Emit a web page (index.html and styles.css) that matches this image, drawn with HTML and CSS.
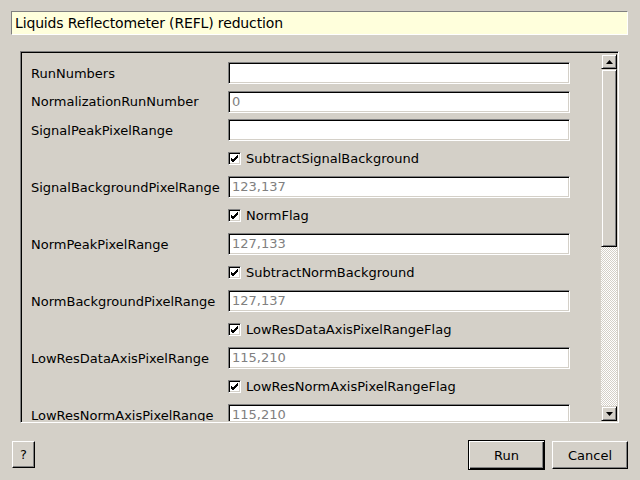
FILE: index.html
```html
<!DOCTYPE html>
<html>
<head>
<meta charset="utf-8">
<link rel="stylesheet" href="styles.css">
</head>
<body>
<div class="dialog">
  <div class="title">Liquids Reflectometer (REFL) reduction</div>
  <div class="frame">
    <div class="content">
      <div class="grid">
        <div class="label">RunNumbers</div><div class="field"></div>
        <div class="label">NormalizationRunNumber</div><div class="field ph">0</div>
        <div class="label">SignalPeakPixelRange</div><div class="field"></div>
        <div></div><div class="check"><span class="box"><svg width="9" height="9" viewBox="0 0 9 9"><path d="M1 4 L3 6 L8 1 M1 5 L3 7 L8 2 M1 6 L3 8 L8 3" stroke="#000" stroke-width="1" fill="none"/></svg></span>SubtractSignalBackground</div>
        <div class="label">SignalBackgroundPixelRange</div><div class="field ph">123,137</div>
        <div></div><div class="check"><span class="box"><svg width="9" height="9" viewBox="0 0 9 9"><path d="M1 4 L3 6 L8 1 M1 5 L3 7 L8 2 M1 6 L3 8 L8 3" stroke="#000" stroke-width="1" fill="none"/></svg></span>NormFlag</div>
        <div class="label">NormPeakPixelRange</div><div class="field ph">127,133</div>
        <div></div><div class="check"><span class="box"><svg width="9" height="9" viewBox="0 0 9 9"><path d="M1 4 L3 6 L8 1 M1 5 L3 7 L8 2 M1 6 L3 8 L8 3" stroke="#000" stroke-width="1" fill="none"/></svg></span>SubtractNormBackground</div>
        <div class="label">NormBackgroundPixelRange</div><div class="field ph">127,137</div>
        <div></div><div class="check"><span class="box"><svg width="9" height="9" viewBox="0 0 9 9"><path d="M1 4 L3 6 L8 1 M1 5 L3 7 L8 2 M1 6 L3 8 L8 3" stroke="#000" stroke-width="1" fill="none"/></svg></span>LowResDataAxisPixelRangeFlag</div>
        <div class="label">LowResDataAxisPixelRange</div><div class="field ph">115,210</div>
        <div></div><div class="check"><span class="box"><svg width="9" height="9" viewBox="0 0 9 9"><path d="M1 4 L3 6 L8 1 M1 5 L3 7 L8 2 M1 6 L3 8 L8 3" stroke="#000" stroke-width="1" fill="none"/></svg></span>LowResNormAxisPixelRangeFlag</div>
        <div class="label">LowResNormAxisPixelRange</div><div class="field ph">115,210</div>
      </div>
    </div>
    <div class="scrollbar">
      <div class="sbtn"><svg width="7" height="4" viewBox="0 0 7 4"><path d="M3.5 0 L7 4 L0 4 Z" fill="#000"/></svg></div>
      <div class="slider"></div>
      <div class="trough"></div>
      <div class="sbtn"><svg width="7" height="4" viewBox="0 0 7 4"><path d="M0 0 L7 0 L3.5 4 Z" fill="#000"/></svg></div>
    </div>
  </div>
  <div class="buttons">
    <div class="btn help">?</div>
    <div class="right">
      <div class="btn default">Run</div>
      <div class="btn">Cancel</div>
    </div>
  </div>
</div>
</body>
</html>
```
FILE: styles.css
```css
html, body {
  margin: 0;
  padding: 0;
  width: 640px;
  height: 480px;
  background: #d4d0c8;
  overflow: hidden;
}
.dialog {
  font-family: "DejaVu Sans", sans-serif;
  font-size: 13px;
  color: #000;
  padding: 11px 12px 0 11px;
  display: flex;
  flex-direction: column;
}
.title {
  height: 22px;
  line-height: 22px;
  font-size: 14px;
  letter-spacing: -0.15px;
  background: #ffffdc;
  border-top: 1px solid #808080;
  border-left: 1px solid #808080;
  border-bottom: 1px solid #ffffff;
  border-right: 1px solid #ffffff;
  padding-left: 3px;
  white-space: nowrap;
}
.frame {
  margin: 16px 9px 0 9px;
  height: 368px;
  border-top: 1px solid #808080;
  border-left: 1px solid #808080;
  border-bottom: 1px solid #ffffff;
  border-right: 1px solid #ffffff;
  box-shadow: inset 1px 1px 0 #000, inset -1px -1px 0 #d4d0c8;
  padding: 1px;
  display: flex;
  overflow: hidden;
}
.content {
  flex: 1;
  overflow: hidden;
  padding: 9px 0 0 9px;
}
.grid {
  display: grid;
  grid-template-columns: 197px 342px;
  grid-auto-rows: 22px;
  row-gap: 6.5px;
}
.label {
  display: flex;
  align-items: center;
  white-space: nowrap;
}
.field {
  box-sizing: border-box;
  height: 22px;
  background: #fff;
  border-top: 1px solid #808080;
  border-left: 1px solid #808080;
  border-bottom: 1px solid #ffffff;
  border-right: 1px solid #ffffff;
  box-shadow: inset 1px 1px 0 #000, inset -1px -1px 0 #d4d0c8;
  padding-left: 3px;
  line-height: 20px;
}
.ph {
  color: #808080;
}
.check {
  display: flex;
  align-items: center;
  white-space: nowrap;
}
.box {
  box-sizing: border-box;
  width: 13px;
  height: 13px;
  background: #fff;
  border-top: 1px solid #808080;
  border-left: 1px solid #808080;
  border-bottom: 1px solid #ffffff;
  border-right: 1px solid #ffffff;
  box-shadow: inset 1px 1px 0 #000, inset -1px -1px 0 #d4d0c8;
  display: flex;
  align-items: center;
  justify-content: center;
  margin-right: 5px;
}
.box svg {
  display: block;
}
.scrollbar {
  width: 16px;
  display: flex;
  flex-direction: column;
  padding-top: 1px;
  box-sizing: border-box;
}
.sbtn, .slider {
  box-sizing: border-box;
  background: #d4d0c8;
  border-top: 1px solid #d4d0c8;
  border-left: 1px solid #d4d0c8;
  border-bottom: 1px solid #000;
  border-right: 1px solid #000;
  box-shadow: inset 1px 1px 0 #fff, inset -1px -1px 0 #808080;
}
.sbtn {
  height: 15px;
  display: flex;
  align-items: center;
  justify-content: center;
}
.sbtn svg {
  display: block;
}
.slider {
  height: 178px;
}
.trough {
  flex: 1;
  background: repeating-conic-gradient(#ffffff 0 25%, #d4d0c8 0 50%) 0 0 / 2px 2px;
}
.buttons {
  margin-top: 17px;
  display: flex;
  justify-content: space-between;
  align-items: flex-start;
}
.right {
  display: flex;
  gap: 7px;
}
.btn {
  box-sizing: border-box;
  height: 28px;
  width: 76px;
  margin-top: 1px;
  display: flex;
  align-items: center;
  justify-content: center;
  background: #d4d0c8;
  border-top: 1px solid #fff;
  border-left: 1px solid #fff;
  border-bottom: 1px solid #000;
  border-right: 1px solid #000;
  box-shadow: inset -1px -1px 0 #808080;
}
.help {
  width: 23px;
  height: 27px;
  margin-left: 1px;
}
.default {
  width: 77px;
  height: 30px;
  margin-top: 0;
  border: 1px solid #000;
  box-shadow: inset 1px 1px 0 #fff, inset -1px -1px 0 #000, inset -2px -2px 0 #808080;
}
```
